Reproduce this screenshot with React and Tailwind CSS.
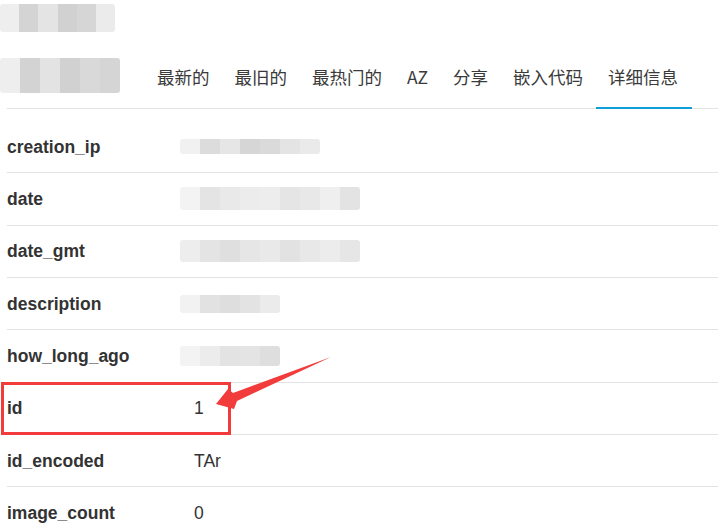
const tabs = ["最新的", "最旧的", "最热门的", "AZ", "分享", "嵌入代码", "详细信息"];

const rows = [
  { key: "creation_ip", blob: { w: 140, h: 15, cells: ["#f1f1f1", "#dcdcdc", "#e6e6e6", "#d6d6d6", "#dadada", "#e4e4e4", "#eaeaea"] } },
  { key: "date", blob: { w: 180, h: 23, cells: ["#f3f3f3", "#e4e4e4", "#e9e9e9", "#ececec", "#ededed", "#e5e5e5", "#e8e8e8", "#efefef", "#e3e3e3"] } },
  { key: "date_gmt", blob: { w: 180, h: 22, cells: ["#ededed", "#e4e4e4", "#dfdfdf", "#e6e6e6", "#e9e9e9", "#e2e2e2", "#e8e8e8", "#ececec", "#e6e6e6"] } },
  { key: "description", blob: { w: 100, h: 18, cells: ["#f2f2f2", "#e2e2e2", "#dedede", "#e3e3e3", "#ebebeb"] } },
  { key: "how_long_ago", blob: { w: 100, h: 20, cells: ["#f3f3f3", "#ececec", "#e3e3e3", "#e4e4e4", "#dedede"] } },
  { key: "id", value: "1", marked: true },
  { key: "id_encoded", value: "TAr" },
  { key: "image_count", value: "0" },
];

function Blob({ w, h, cells }) {
  return (
    <div className="flex overflow-hidden rounded-[3px] blur-[0.6px]" style={{ width: w, height: h }}>
      {cells.map((c, i) => (
        <div key={i} className="h-full flex-1" style={{ backgroundColor: c }} />
      ))}
    </div>
  );
}

export default function App() {
  return (
    <div
      className="relative h-[532px] w-[718px] overflow-hidden bg-white text-[#333]"
      style={{ fontFamily: '"Liberation Sans", Arial, "Noto Sans CJK SC", sans-serif' }}
    >
      <div className="h-[45px] pt-[4px]">
        <Blob w={115} h={28} cells={["#eeeeee", "#d4d4d4", "#e4e4e4", "#d1d1d1", "#d6d6d6", "#ebebeb"]} />
      </div>

      <div className="ml-[7px] flex h-[64px] items-stretch border-b border-[#e3e3e3]">
        <div className="-ml-[7px] flex w-[144.5px] items-start pt-[13px]">
          <Blob w={120} h={35} cells={["#eeeeee", "#d3d3d3", "#e3e3e3", "#d1d1d1", "#d9d9d9", "#d5d5d5"]} />
        </div>
        {tabs.map((t, i) => {
          const active = i === tabs.length - 1;
          return (
            <div
              key={t}
              className={`-mb-px flex items-center px-[12.5px] pt-[2px] text-[17.5px] text-[#3a3a3a] ${
                active ? "border-b-[2px] border-[#0c9fd8] pr-[14px]" : "border-b-[2px] border-transparent"
              }`}
              style={{ fontFamily: '"Noto Sans CJK SC", "Liberation Sans", sans-serif' }}
            >
              {t}
            </div>
          );
        })}
      </div>

      <div className="ml-[7px] mt-[12px]">
        {rows.map((r) => (
          <div key={r.key} className="relative flex h-[52.33px] items-center border-b border-[#e3e3e3] text-[17.5px]">
            <div className="w-[188px] font-bold text-[#333]">{r.key}</div>
            {r.blob ? (
              <div className="-ml-[15px]">
                <Blob {...r.blob} />
              </div>
            ) : (
              <div className="-ml-px text-[#333]">{r.value}</div>
            )}
            {r.marked && (
              <div className="absolute -left-[6px] -top-[1px] h-[53px] w-[230px] border-[3px] border-[#f23b3b]" />
            )}
          </div>
        ))}
      </div>

      <svg className="absolute left-0 top-0" width="718" height="532" viewBox="0 0 718 532">
        <polygon points="216,404 228,389 233,393 331,357 237,401 234,409" fill="#f23b3b" />
      </svg>
    </div>
  );
}
